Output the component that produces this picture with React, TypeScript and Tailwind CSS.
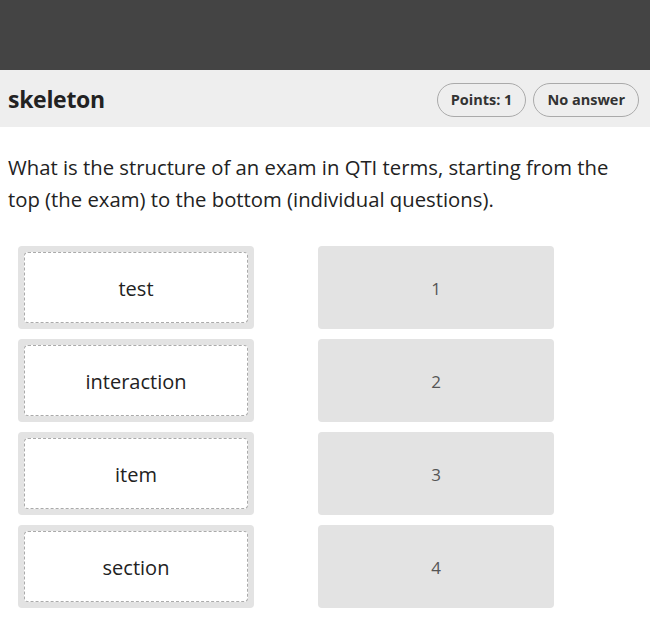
const items = ['test', 'interaction', 'item', 'section'];

export default function App() {
  return (
    <div className="min-h-[618px] bg-white text-[#333] font-['Open_Sans',sans-serif]">
      <div className="h-[70px] bg-[#444444]" />
      <div className="h-[57px] bg-[#eeeeee] flex items-center justify-between pl-2 pr-[11px]">
        <h1 className="text-[23px] font-bold text-[#222] tracking-[-0.3px] mt-[2px]">skeleton</h1>
        <div className="flex gap-[7px] mt-[2px]">
          <span className="h-[34px] px-[13px] flex items-center rounded-full border border-[#aaa] text-[14.5px] font-bold">
            Points: 1
          </span>
          <span className="h-[34px] px-[13px] flex items-center rounded-full border border-[#aaa] text-[14.5px] font-bold">
            No answer
          </span>
        </div>
      </div>
      <p className="px-2 pt-[24px] text-[20.3px] leading-[32px] text-[#222]">
        What is the structure of an exam in QTI terms, starting from the top (the exam) to the
        bottom (individual questions).
      </p>
      <div className="flex gap-16 pl-[18px] pt-[31px]">
        <div className="flex flex-col gap-[10px] w-[236px]">
          {items.map((t) => (
            <div key={t} className="h-[83px] bg-[#e3e3e3] rounded p-[6px]">
              <div className="h-full bg-white border border-dashed border-[#aaa] rounded-sm flex items-center justify-center pt-[3px] text-[20px] text-[#222]">
                {t}
              </div>
            </div>
          ))}
        </div>
        <div className="flex flex-col gap-[10px] w-[236px]">
          {[1, 2, 3, 4].map((n) => (
            <div key={n} className="h-[83px] bg-[#e3e3e3] rounded flex items-center justify-center pt-[3px] text-[17px] text-[#555]">
              {n}
            </div>
          ))}
        </div>
      </div>
    </div>
  );
}
